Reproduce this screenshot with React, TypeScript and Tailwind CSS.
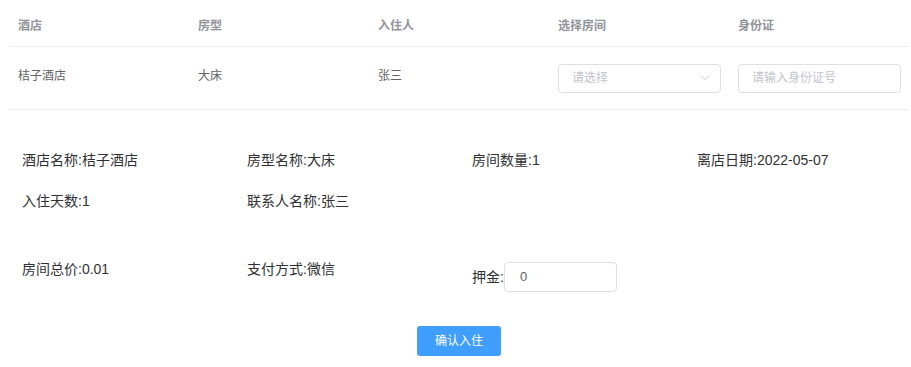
import { ChevronDown } from "lucide-react";

const font = "font-['Liberation_Sans','Noto_Sans_CJK_SC',sans-serif]";

const headers = ["酒店", "房型", "入住人", "选择房间", "身份证"];

export default function App() {
  return (
    <div className={`w-[911px] h-[367px] bg-white overflow-hidden ${font}`}>
      {/* Table */}
      <div className="ml-[9px] w-[900px]">
        <div className="flex h-[47px] pt-[6px] border-b border-[#ebeef5] text-[12px] font-bold text-[#909399]">
          {headers.map((h) => (
            <div key={h} className="w-[180px] shrink-0 pl-[9px] flex items-center">
              {h}
            </div>
          ))}
        </div>
        <div className="flex h-[63px] border-b border-[#ebeef5] text-[12px] text-[#606266]">
          <div className="w-[180px] shrink-0 pl-[9px] flex items-center pb-[5px]">桔子酒店</div>
          <div className="w-[180px] shrink-0 pl-[9px] flex items-center pb-[5px]">大床</div>
          <div className="w-[180px] shrink-0 pl-[9px] flex items-center pb-[5px]">张三</div>
          <div className="w-[180px] shrink-0 pl-[9px] flex items-center">
            <div className="w-[163px] h-[29px] border border-[#dcdfe6] rounded-[4px] flex items-center justify-between pl-[13px] pr-[8px] text-[#c0c4cc]">
              <span>请选择</span>
              <ChevronDown className="w-[14px] h-[14px] text-[#c0c4cc]" strokeWidth={1.5} />
            </div>
          </div>
          <div className="w-[180px] shrink-0 pl-[9px] flex items-center">
            <div className="w-[163px] h-[29px] border border-[#dcdfe6] rounded-[4px] flex items-center pl-[13px] text-[#c0c4cc]">
              请输入身份证号
            </div>
          </div>
        </div>
      </div>

      {/* Details */}
      <div className="pl-[22px] pt-[40px] text-[14px] leading-[20px] text-[#303133]">
        <div className="flex">
          <div className="w-[225px] shrink-0">酒店名称:桔子酒店</div>
          <div className="w-[225px] shrink-0">房型名称:大床</div>
          <div className="w-[225px] shrink-0">房间数量:1</div>
          <div className="w-[225px] shrink-0">离店日期:2022-05-07</div>
        </div>
        <div className="flex mt-[21px]">
          <div className="w-[225px] shrink-0">入住天数:1</div>
          <div className="w-[225px] shrink-0">联系人名称:张三</div>
        </div>
        <div className="flex items-start mt-[48px]">
          <div className="w-[225px] shrink-0">房间总价:0.01</div>
          <div className="w-[225px] shrink-0">支付方式:微信</div>
          <div className="w-[225px] shrink-0 flex items-center mt-[3px]">
            <span>押金:</span>
            <div className="w-[113px] h-[30px] border border-[#dcdfe6] rounded-[4px] flex items-center pl-[15px] text-[13px] text-[#606266]">
              0
            </div>
          </div>
        </div>
      </div>

      {/* Button */}
      <div className="pl-[22px] pr-[15px] mt-[34px] flex justify-center">
        <button className="w-[84px] h-[30px] rounded-[3px] bg-[#409eff] text-white text-[12px]">
          确认入住
        </button>
      </div>
    </div>
  );
}
